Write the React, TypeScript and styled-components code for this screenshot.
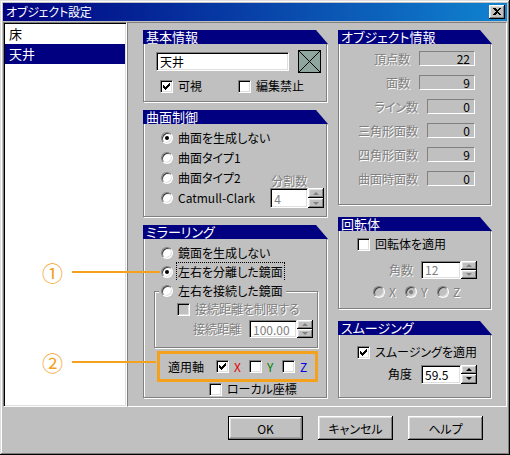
import React from "react";
import styled, { createGlobalStyle } from "styled-components";

const ORANGE = "#f4a11e";

const Global = createGlobalStyle`
  html, body { margin: 0; padding: 0; background: #c0c0c0; }
  body {
    font-family: "Noto Sans CJK JP", "Noto Sans", sans-serif;
    font-size: 12px;
    color: #000;
    font-feature-settings: "palt";
  }
  * { box-sizing: border-box; }
`;

const Win = styled.div`
  position: relative;
  width: 510px;
  height: 455px;
  background: #c0c0c0;
  padding: 3px;
  box-shadow: inset -1px -1px 0 #000, inset 1px 1px 0 #dfdfdf,
    inset -2px -2px 0 #808080, inset 2px 2px 0 #fff;
  display: flex;
  flex-direction: column;
  overflow: hidden;
`;

const TitleBar = styled.div`
  height: 18px;
  margin-bottom: 1px;
  background: linear-gradient(to right, #000080, #1084d0);
  color: #fff;
  display: flex;
  align-items: center;
  justify-content: space-between;
  padding: 0 2px 0 3px;
  font-size: 12px;
  line-height: 18px;
`;

const TitleText = styled.span`
  letter-spacing: -0.2px;
`;

const CloseBtn = styled.div`
  width: 16px;
  height: 14px;
  background: #c0c0c0;
  box-shadow: inset -1px -1px 0 #000, inset 1px 1px 0 #fff,
    inset -2px -2px 0 #808080, inset 2px 2px 0 #dfdfdf;
  display: flex;
  align-items: center;
  justify-content: center;
  padding-bottom: 1px;
`;

const Body = styled.div`
  display: flex;
  height: 385px;
`;

const ListBox = styled.div`
  width: 124px;
  background: #fff;
  border: 1px solid;
  border-color: #808080 #fff #fff #808080;
  box-shadow: inset 1px 1px 0 #000, inset -1px -1px 0 #dfdfdf;
  padding: 1px;
`;

const ListItem = styled.div<{ $sel?: boolean }>`
  height: 20px;
  line-height: 20px;
  padding-left: 4px;
  font-size: 13px;
  background: ${(p) => (p.$sel ? "#000080" : "transparent")};
  color: ${(p) => (p.$sel ? "#fff" : "#000")};
`;

const MainPanel = styled.div`
  flex: 1;
  border: 1px solid;
  border-color: #808080 #fff #fff #808080;
  padding: 7px 14px 0 15px;
  display: flex;
  gap: 10px;
`;

const Column = styled.div<{ $w: number; $gap: number }>`
  width: ${(p) => p.$w}px;
  display: flex;
  flex-direction: column;
  gap: ${(p) => p.$gap}px;
`;

const PanelWrap = styled.div<{ $h: number }>`
  height: ${(p) => p.$h}px;
  display: flex;
  flex-direction: column;
`;

const PanelHeader = styled.div`
  height: 14px;
  line-height: 14px;
  background: #000080;
  color: #fff;
  padding-left: 3px;
  font-size: 13px;
  clip-path: polygon(0 0, calc(100% - 12px) 0, 100% 100%, 0 100%);
  white-space: nowrap;
`;

const PanelBox = styled.div`
  flex: 1;
  border: 1px solid #808080;
  border-top: none;
  width: calc(100% - 1px);
  box-shadow: inset 1px 0 0 #fff, 1px 1px 0 #fff;
  display: flex;
  flex-direction: column;
  position: relative;
`;

const Panel: React.FC<{ title: string; h: number; children?: React.ReactNode }> = ({
  title,
  h,
  children,
}) => (
  <PanelWrap $h={h}>
    <PanelHeader>{title}</PanelHeader>
    <PanelBox>{children}</PanelBox>
  </PanelWrap>
);

/* ---------- primitives ---------- */

const CheckBoxBox = styled.span<{ $disabled?: boolean }>`
  width: 13px;
  height: 13px;
  flex: none;
  background: ${(p) => (p.$disabled ? "#c0c0c0" : "#fff")};
  border: 1px solid;
  border-color: #808080 #fff #fff #808080;
  box-shadow: inset 1px 1px 0 #000, inset -1px -1px 0 #dfdfdf;
  display: flex;
  align-items: center;
  justify-content: center;
`;

const CheckMark = () => (
  <svg width="7" height="7" viewBox="0 0 7 7" shapeRendering="crispEdges">
    <polygon points="0,2 2,4 6,0 7,0 7,3 2,7 0,5" fill="#000" />
  </svg>
);

const CheckBox: React.FC<{ checked?: boolean; disabled?: boolean }> = ({ checked, disabled }) => (
  <CheckBoxBox $disabled={disabled}>{checked && <CheckMark />}</CheckBoxBox>
);

const RadioCircle = styled.span<{ $disabled?: boolean }>`
  width: 12px;
  height: 12px;
  flex: none;
  border-radius: 50%;
  background: ${(p) => (p.$disabled ? "#c0c0c0" : "#fff")};
  border: 1px solid;
  border-color: #808080 #fff #fff #808080;
  box-shadow: inset 1px 1px 0 #404040, inset -1px -1px 0 #dfdfdf;
  display: flex;
  align-items: center;
  justify-content: center;
`;

const RadioDot = styled.span<{ $disabled?: boolean }>`
  width: 4px;
  height: 4px;
  border-radius: 50%;
  background: ${(p) => (p.$disabled ? "#808080" : "#000")};
`;

const Radio: React.FC<{ checked?: boolean; disabled?: boolean }> = ({ checked, disabled }) => (
  <RadioCircle $disabled={disabled}>{checked && <RadioDot $disabled={disabled} />}</RadioCircle>
);

const Label = styled.span<{ $disabled?: boolean; $w?: number; $focus?: boolean }>`
  font-size: 12px;
  line-height: 16px;
  white-space: nowrap;
  color: ${(p) => (p.$disabled ? "#808080" : "#000")};
  text-shadow: ${(p) => (p.$disabled ? "1px 1px 0 #fff" : "none")};
  ${(p) => (p.$w ? `width: ${p.$w}px; flex: none;` : "")}
  ${(p) => (p.$focus ? "outline: 1px dotted #000; outline-offset: 1px;" : "")}
`;

const Edit = styled.div<{ $w: number; $h: number; $disabled?: boolean }>`
  width: ${(p) => p.$w}px;
  height: ${(p) => p.$h}px;
  background: #fff;
  border: 1px solid;
  border-color: #808080 #fff #fff #808080;
  box-shadow: inset 1px 1px 0 #000, inset -1px -1px 0 #dfdfdf;
  padding-left: 3px;
  display: flex;
  align-items: center;
  font-size: 12px;
  color: ${(p) => (p.$disabled ? "#808080" : "#000")};
  flex: none;
`;

const SpinCol = styled.div<{ $h: number }>`
  width: 16px;
  height: ${(p) => p.$h}px;
  display: flex;
  flex-direction: column;
  flex: none;
`;

const SpinBtn = styled.div`
  flex: 1;
  background: #c0c0c0;
  box-shadow: inset -1px -1px 0 #000, inset 1px 1px 0 #fff,
    inset -2px -2px 0 #808080, inset 2px 2px 0 #dfdfdf;
  display: flex;
  align-items: center;
  justify-content: center;
`;

const Arrow = styled.span<{ $down?: boolean; $disabled?: boolean }>`
  width: 0;
  height: 0;
  border-left: 3px solid transparent;
  border-right: 3px solid transparent;
  ${(p) =>
    p.$down
      ? `border-top: 3px solid ${p.$disabled ? "#808080" : "#000"};`
      : `border-bottom: 3px solid ${p.$disabled ? "#808080" : "#000"};`}
`;

const SpinWrap = styled.div`
  display: flex;
  flex: none;
`;

const SpinEdit: React.FC<{ value: string; w: number; h: number; disabled?: boolean }> = ({
  value,
  w,
  h,
  disabled,
}) => (
  <SpinWrap>
    <Edit $w={w} $h={h} $disabled={disabled}>
      {value}
    </Edit>
    <SpinCol $h={h}>
      <SpinBtn>
        <Arrow $disabled={disabled} />
      </SpinBtn>
      <SpinBtn>
        <Arrow $down $disabled={disabled} />
      </SpinBtn>
    </SpinCol>
  </SpinWrap>
);

const Row = styled.div<{ $pl?: number; $h?: number; $mt?: number; $gap?: number }>`
  display: flex;
  align-items: center;
  height: ${(p) => p.$h ?? 16}px;
  padding-left: ${(p) => p.$pl ?? 0}px;
  margin-top: ${(p) => p.$mt ?? 0}px;
  gap: ${(p) => p.$gap ?? 5}px;
  flex: none;
`;

/* ---------- basic info ---------- */

const BasicBox = styled.div`
  padding: 6px 0 0 12px;
  display: flex;
  flex-direction: column;
`;

const NameRow = styled.div`
  display: flex;
  align-items: center;
  gap: 9px;
  height: 23px;
`;

const Swatch = styled.div`
  width: 23px;
  height: 23px;
  border: 1px solid #000;
  background: #8fa69e;
  display: flex;
`;

const CheckItem = styled.div<{ $w?: number }>`
  display: flex;
  align-items: center;
  gap: 5px;
  ${(p) => (p.$w ? `width: ${p.$w}px;` : "")}
`;

/* ---------- surface ---------- */

const SurfaceBox = styled.div`
  display: flex;
  padding: 4px 11px 0 17px;
`;

const RadioList = styled.div`
  display: flex;
  flex-direction: column;
`;

const SideBlock = styled.div`
  margin-left: auto;
  margin-top: 45px;
  display: flex;
  flex-direction: column;
  gap: 0;
`;

const SideLabel = styled(Label)`
  line-height: 15px;
  padding-left: 1px;
`;

/* ---------- mirroring ---------- */

const MirrorBox = styled.div`
  padding-top: 4px;
  display: flex;
  flex-direction: column;
`;

const SubGroup = styled.fieldset`
  margin: 0 8px 0 10px;
  padding: 0 0 8px 0;
  border: 1px solid #808080;
  box-shadow: inset 1px 1px 0 #fff, 1px 1px 0 #fff;
  min-width: 0;
`;

const SubLegend = styled.legend`
  margin-left: 4px;
  padding: 0 3px 0 2px;
  height: 20px;
  display: flex;
  align-items: center;
  gap: 5px;
  background: #c0c0c0;
`;

const AxisBox = styled.div`
  position: relative;
  z-index: 1;
  margin: 3px 0 0 13px;
  width: 161px;
  height: 31px;
  border: 3px solid ${ORANGE};
  background: #c0c0c0;
  display: flex;
  align-items: center;
  padding-left: 8px;
  flex: none;
`;

const AxisItem = styled.div`
  display: flex;
  align-items: center;
  gap: 5px;
  width: 36px;
`;

const AxisLetter = styled.span<{ $c: string }>`
  color: ${(p) => p.$c};
  font-size: 12px;
  line-height: 16px;
`;

/* ---------- object info ---------- */

const InfoBox = styled.div`
  padding: 7px 15px 0 0;
  display: flex;
  flex-direction: column;
  gap: 9px;
`;

const InfoRow = styled.div`
  display: flex;
  justify-content: flex-end;
  align-items: center;
  gap: 9px;
  height: 15px;
`;

const InfoField = styled.div<{ $w: number }>`
  width: ${(p) => p.$w}px;
  height: 15px;
  border: 1px solid;
  border-color: #808080 #fff #fff #808080;
  text-align: right;
  padding-right: 4px;
  font-size: 12px;
  line-height: 13px;
`;

/* ---------- rotation / smoothing ---------- */

const StackBox = styled.div<{ $pt: number }>`
  padding-top: ${(p) => p.$pt}px;
  display: flex;
  flex-direction: column;
`;

const RadioItem = styled.div`
  display: flex;
  align-items: center;
  gap: 4px;
  width: 32px;
`;

/* ---------- buttons ---------- */

const ButtonRow = styled.div`
  display: flex;
  padding: 9px 0 0 225px;
  gap: 15px;
`;

const Button = styled.div<{ $default?: boolean }>`
  width: 75px;
  height: 24px;
  background: #c0c0c0;
  display: flex;
  align-items: center;
  justify-content: center;
  font-size: 12px;
  ${(p) =>
    p.$default
      ? `border: 1px solid #000;
         box-shadow: inset -1px -1px 0 #808080, inset 1px 1px 0 #fff, inset -2px -2px 0 #a0a0a0, inset 2px 2px 0 #dfdfdf;`
      : `box-shadow: inset -1px -1px 0 #000, inset 1px 1px 0 #fff, inset -2px -2px 0 #808080, inset 2px 2px 0 #dfdfdf;`}
`;

/* ---------- annotations ---------- */

const Annot = styled.div<{ $top: number }>`
  position: absolute;
  left: 42px;
  top: ${(p) => p.$top}px;
  height: 20px;
  display: flex;
  align-items: center;
  z-index: 5;
  pointer-events: none;
`;

const CircNum = styled.span`
  color: ${ORANGE};
  font-size: 21px;
  line-height: 20px;
  width: 22px;
`;

const AnnotLine = styled.span<{ $w: number }>`
  display: block;
  width: ${(p) => p.$w}px;
  height: 2px;
  margin-left: 8px;
  background: ${ORANGE};
`;

export default function App() {
  return (
    <>
      <Global />
      <Win>
        <TitleBar>
          <TitleText>オブジェクト設定</TitleText>
          <CloseBtn>
            <svg width="8" height="7" viewBox="0 0 8 7" shapeRendering="crispEdges">
              <path d="M0 0h2l2 2 2-2h2L5 3.5 8 7H6L4 5 2 7H0l3-3.5z" fill="#000" />
            </svg>
          </CloseBtn>
        </TitleBar>
        <Body>
          <ListBox>
            <ListItem>床</ListItem>
            <ListItem $sel>天井</ListItem>
          </ListBox>
          <MainPanel>
            <Column $w={185} $gap={8}>
              <Panel title="基本情報" h={72}>
                <BasicBox>
                  <NameRow>
                    <Edit $w={133} $h={19}>
                      天井
                    </Edit>
                    <Swatch>
                      <svg width="21" height="21" viewBox="0 0 21 21">
                        <path d="M0 0L21 21M21 0L0 21" stroke="#000" strokeWidth="1" />
                      </svg>
                    </Swatch>
                  </NameRow>
                  <Row $pl={4} $mt={5}>
                    <CheckItem $w={73}>
                      <CheckBox checked />
                      <Label>可視</Label>
                    </CheckItem>
                    <CheckItem>
                      <CheckBox />
                      <Label>編集禁止</Label>
                    </CheckItem>
                  </Row>
                </BasicBox>
              </Panel>
              <Panel title="曲面制御" h={107}>
                <SurfaceBox>
                  <RadioList>
                    <Row $h={20}>
                      <Radio checked />
                      <Label>曲面を生成しない</Label>
                    </Row>
                    <Row $h={20}>
                      <Radio />
                      <Label>曲面タイプ1</Label>
                    </Row>
                    <Row $h={20}>
                      <Radio />
                      <Label>曲面タイプ2</Label>
                    </Row>
                    <Row $h={20}>
                      <Radio />
                      <Label>Catmull-Clark</Label>
                    </Row>
                  </RadioList>
                  <SideBlock>
                    <SideLabel $disabled>分割数</SideLabel>
                    <SpinEdit value="4" w={38} h={20} disabled />
                  </SideBlock>
                </SurfaceBox>
              </Panel>
              <Panel title="ミラーリング" h={172}>
                <MirrorBox>
                  <Row $pl={17} $h={19}>
                    <Radio />
                    <Label>鏡面を生成しない</Label>
                  </Row>
                  <Row $pl={17} $h={19}>
                    <Radio checked />
                    <Label $focus>左右を分離した鏡面</Label>
                  </Row>
                  <SubGroup>
                    <SubLegend>
                      <Radio />
                      <Label>左右を接続した鏡面</Label>
                    </SubLegend>
                    <Row $pl={22}>
                      <CheckBox disabled />
                      <Label $disabled>接続距離を制限する</Label>
                    </Row>
                    <Row $pl={38} $h={20} $mt={2} $gap={0}>
                      <Label $disabled $w={56}>
                        接続距離
                      </Label>
                      <SpinEdit value="100.00" w={48} h={18} disabled />
                    </Row>
                  </SubGroup>
                  <AxisBox>
                    <Label $w={48}>適用軸</Label>
                    <AxisItem>
                      <CheckBox checked />
                      <AxisLetter $c="#e00000">X</AxisLetter>
                    </AxisItem>
                    <AxisItem>
                      <CheckBox />
                      <AxisLetter $c="#008000">Y</AxisLetter>
                    </AxisItem>
                    <AxisItem>
                      <CheckBox />
                      <AxisLetter $c="#0000e0">Z</AxisLetter>
                    </AxisItem>
                  </AxisBox>
                  <Row $pl={65} $mt={-1}>
                    <CheckBox />
                    <Label>ローカル座標</Label>
                  </Row>
                </MirrorBox>
              </Panel>
            </Column>
            <Column $w={154} $gap={12}>
              <Panel title="オブジェクト情報" h={175}>
                <InfoBox>
                  <InfoRow>
                    <Label $disabled>頂点数</Label>
                    <InfoField $w={56}>22</InfoField>
                  </InfoRow>
                  <InfoRow>
                    <Label $disabled>面数</Label>
                    <InfoField $w={56}>9</InfoField>
                  </InfoRow>
                  <InfoRow>
                    <Label $disabled>ライン数</Label>
                    <InfoField $w={48}>0</InfoField>
                  </InfoRow>
                  <InfoRow>
                    <Label $disabled>三角形面数</Label>
                    <InfoField $w={48}>0</InfoField>
                  </InfoRow>
                  <InfoRow>
                    <Label $disabled>四角形面数</Label>
                    <InfoField $w={48}>9</InfoField>
                  </InfoRow>
                  <InfoRow>
                    <Label $disabled>曲面時面数</Label>
                    <InfoField $w={48}>0</InfoField>
                  </InfoRow>
                </InfoBox>
              </Panel>
              <Panel title="回転体" h={92}>
                <StackBox $pt={5}>
                  <Row $pl={18}>
                    <CheckBox />
                    <Label>回転体を適用</Label>
                  </Row>
                  <Row $pl={50} $h={19} $mt={8} $gap={0}>
                    <Label $disabled $w={32}>
                      角数
                    </Label>
                    <SpinEdit value="12" w={40} h={18} disabled />
                  </Row>
                  <Row $pl={34} $mt={5} $gap={0}>
                    <RadioItem>
                      <Radio disabled />
                      <Label $disabled>X</Label>
                    </RadioItem>
                    <RadioItem>
                      <Radio disabled checked />
                      <Label $disabled>Y</Label>
                    </RadioItem>
                    <RadioItem>
                      <Radio disabled />
                      <Label $disabled>Z</Label>
                    </RadioItem>
                  </Row>
                </StackBox>
              </Panel>
              <Panel title="スムージング" h={77}>
                <StackBox $pt={9}>
                  <Row $pl={18}>
                    <CheckBox checked />
                    <Label>スムージングを適用</Label>
                  </Row>
                  <Row $pl={49} $h={20} $mt={4} $gap={0}>
                    <Label $w={33}>角度</Label>
                    <SpinEdit value="59.5" w={40} h={19} />
                  </Row>
                </StackBox>
              </Panel>
            </Column>
          </MainPanel>
        </Body>
        <ButtonRow>
          <Button $default>OK</Button>
          <Button>キャンセル</Button>
          <Button>ヘルプ</Button>
        </ButtonRow>
        <Annot $top={262}>
          <CircNum>①</CircNum>
          <AnnotLine $w={88} />
        </Annot>
        <Annot $top={352}>
          <CircNum>②</CircNum>
          <AnnotLine $w={84} />
        </Annot>
      </Win>
    </>
  );
}
